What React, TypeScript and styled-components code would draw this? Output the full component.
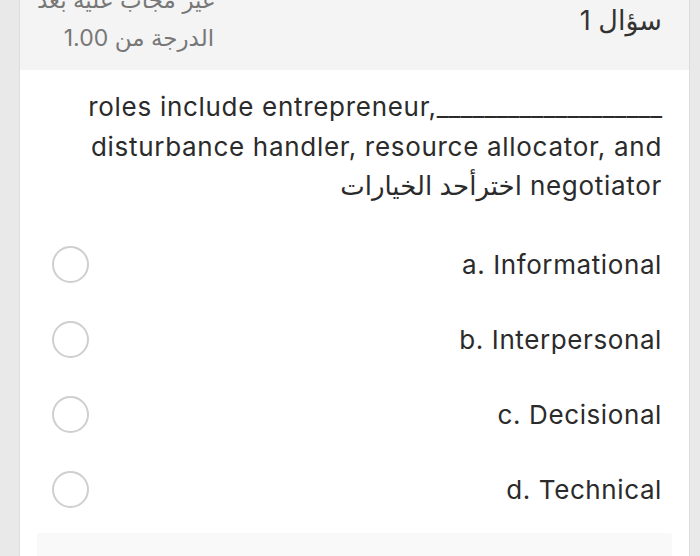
import styled, { createGlobalStyle } from "styled-components"

const GlobalStyle = createGlobalStyle`
	html, body {
		margin: 0;
		padding: 0;
		background: #e9e9e9;
		font-family: Inter, "DejaVu Sans", sans-serif;
		overflow: hidden;
	}
`

const options = [
	{ id: "a", label: "a. Informational" },
	{ id: "b", label: "b. Interpersonal" },
	{ id: "c", label: "c. Decisional" },
	{ id: "d", label: "d. Technical" },
]

const App = () => {
	return (
		<>
			<GlobalStyle />
			<Page>
				<Card dir="rtl">
					<Header>
						<QuestionNo>سؤال 1</QuestionNo>
						<Info>
							<InfoLine>غير مجاب عليه بعد</InfoLine>
							<InfoLine>الدرجة من 1.00</InfoLine>
						</Info>
					</Header>
					<Body>
						<QuestionText>
							<span dir="ltr">
								roles include entrepreneur,<Blank>___________________</Blank>
								<br />
								disturbance handler, resource allocator, and
								<br />
								negotiator
							</span>{" "}
							اخترأحد الخيارات
						</QuestionText>
						<Options>
							{options.map(o => (
								<Option key={o.id}>
									<Label>{o.label}</Label>
									<Radio />
								</Option>
							))}
						</Options>
						<Feedback />
					</Body>
				</Card>
			</Page>
		</>
	)
}

export default App

const Page = styled.div`
	height: 556px;
	padding: 0 10px 0 19px;
	box-sizing: border-box;
	overflow: hidden;
`

const Card = styled.div`
	height: 100%;
	background: white;
	border-left: 1px solid #dcdcdc;
	border-right: 1px solid #dcdcdc;
	display: flex;
	flex-direction: column;
`

const Header = styled.div`
	height: 70px;
	background: #f4f4f4;
	display: flex;
	justify-content: space-between;
	align-items: flex-start;
	padding: 0 27px 0 0;
	overflow: hidden;
	flex-shrink: 0;
`

const QuestionNo = styled.div`
	font-size: 27px;
	line-height: 42px;
	color: #333;
`

const Info = styled.div`
	margin-top: -19px;
	margin-left: 17px;
	display: flex;
	flex-direction: column;
	align-items: flex-start;
`

const InfoLine = styled.div`
	font-size: 23px;
	line-height: 38px;
	color: #777;
`

const Body = styled.div`
	padding: 17px 27px 0 0;
	display: flex;
	flex-direction: column;
`

const QuestionText = styled.p`
	margin: 0;
	font-size: 26px;
	letter-spacing: 0.7px;
	line-height: 39.5px;
	color: #2b2b2b;
	white-space: nowrap;
`

const Blank = styled.span`
	letter-spacing: 0;
`

const Options = styled.div`
	margin-top: 21px;
	display: flex;
	flex-direction: column;
`

const Option = styled.label`
	height: 75px;
	display: flex;
	align-items: center;
	justify-content: space-between;
`

const Label = styled.span`
	font-size: 26px;
	letter-spacing: 0.6px;
	color: #2b2b2b;
`

const Radio = styled.span`
	width: 33px;
	height: 33px;
	border: 2px solid #cfcfcf;
	border-radius: 50%;
	margin-left: 32px;
`

const Feedback = styled.div`
	margin: 6px -10px 0 17px;
	height: 40px;
	background: #f9f9f9;
	border-radius: 3px;
`
